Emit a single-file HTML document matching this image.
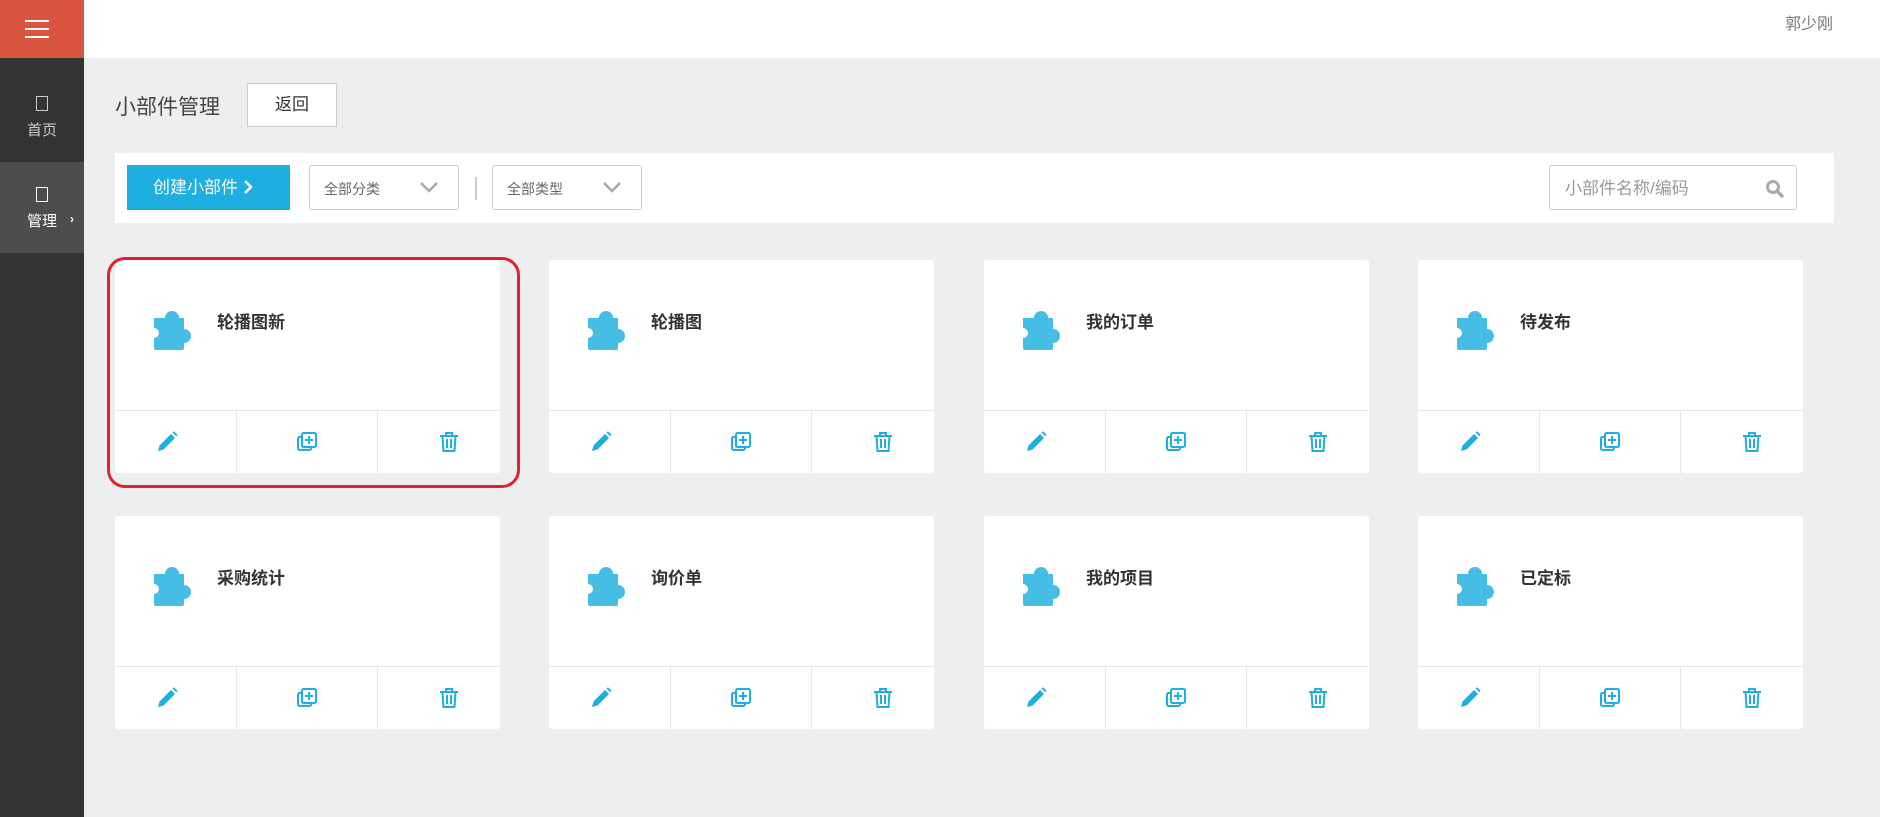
<!DOCTYPE html>
<html><head><meta charset="utf-8"><style>
*{margin:0;padding:0;box-sizing:border-box}
body{width:1880px;height:817px;background:#edeef0;font-family:"Liberation Sans","Noto Sans CJK SC",sans-serif;position:relative;overflow:hidden}
.abs{position:absolute}
.side{left:0;top:0;width:84px;height:817px;background:#333}
.burger{left:0;top:0;width:84px;height:58px;background:#d9553f}
.burger i{position:absolute;left:25px;width:24px;height:2px;background:#fff}
.item{left:0;width:84px;color:#ccc;font-size:15px;text-align:center}
.item .box{width:12px;height:15px;border:1px solid #ccc;margin:0 auto 8px}
.head{left:84px;top:0;width:1796px;height:58px;background:#fff}
.sel{background:#fff;border:1px solid #ccc;border-radius:3px;height:45px;top:165px;font-size:14px;color:#666;padding:13px 0 0 14px}
.card{width:385px;height:213px;background:#fff;border-radius:3px}
.card .t{position:absolute;left:102px;top:48px;font-size:17px;font-weight:bold;color:#333}
.card .pz{position:absolute;left:37px;top:48px}
.card .ft{position:absolute;left:0;top:150px;width:385px;height:63px;border-top:1px solid #e6e6e6}
.card .d{position:absolute;top:0;width:1px;height:63px;background:#e6e6e6}
.card .ic{position:absolute;top:20px}
</style></head><body>
<div class="abs side"></div>
<div class="abs burger"><i style="top:20px"></i><i style="top:28px"></i><i style="top:36px"></i></div>
<div class="abs item" style="top:96px"><div class="box"></div>首页</div>
<div class="abs item" style="top:162px;height:91px;background:#4d4d4d;color:#fff;padding-top:25px"><div class="box" style="border-color:#fff"></div>管理<span style="position:absolute;left:70px;top:50px;font-size:12px;font-weight:bold">›</span></div>
<div class="abs head"></div>
<div class="abs" style="left:1785px;top:10px;font-size:16px;color:#777">郭少刚</div>
<div class="abs" style="left:115px;top:91px;font-size:21px;color:#444">小部件管理</div>
<div class="abs" style="left:247px;top:83px;width:90px;height:44px;background:#fff;border:1px solid #ccc;font-size:17px;color:#333;text-align:center;line-height:42px">返回</div>
<div class="abs" style="left:115px;top:153px;width:1719px;height:70px;background:#fff"></div>
<div class="abs" style="left:127px;top:165px;width:163px;height:45px;background:#1eaee0;color:#fff;font-size:17px;line-height:45px;padding-left:26px">创建小部件 <svg width="10" height="16" viewBox="0 0 10 16" style="vertical-align:-2px"><path d="M2 2l6 6-6 6" stroke="#fff" stroke-width="2.5" fill="none"/></svg></div>
<div class="abs sel" style="left:309px;width:150px">全部分类<svg class="abs" style="left:109px;top:15px" width="20" height="12"><path d="M2 2l8 8 8-8" stroke="#aaa" stroke-width="2.5" fill="none"/></svg></div>
<div class="abs" style="left:475px;top:177px;width:2px;height:23px;background:#ccc"></div>
<div class="abs sel" style="left:492px;width:150px">全部类型<svg class="abs" style="left:109px;top:15px" width="20" height="12"><path d="M2 2l8 8 8-8" stroke="#aaa" stroke-width="2.5" fill="none"/></svg></div>
<div class="abs sel" style="left:1549px;width:248px;font-size:17px;color:#999;padding:8px 0 0 15px">小部件名称/编码<svg class="abs" style="left:215px;top:13px" width="20" height="20"><circle cx="8" cy="8" r="5.5" stroke="#aaa" stroke-width="3" fill="none"/><path d="M12 12l5 5" stroke="#aaa" stroke-width="3.5" stroke-linecap="round"/></svg></div>

<div id="cards"></div>
<div class="abs" style="left:107px;top:257px;width:413px;height:231px;border:3px solid #e4202a;border-radius:18px"></div>
<script>
var names=["轮播图新","轮播图","我的订单","待发布","采购统计","询价单","我的项目","已定标"];
var xs=[115,549,984,1418],ys=[260,516],h="";
var pz='<svg class="pz" width="42" height="42" viewBox="0 0 42 42"><path fill="#45bde5" d="M2 10h11a7 7 0 1 1 14 0h5v11a7 7 0 1 1 0 14v5a2 2 0 0 1-2 2H4a2 2 0 0 1-2-2V30a5 5 0 1 0 0-10z"/></svg>';
var pen='<svg class="ic" style="left:41px" width="22" height="22" viewBox="0 0 22 22"><path fill="#1eaee0" d="M2 20l1.5-5.5L15 3l4 4L7.5 18.5zM16.5 1.5l1.5-1.2 3.5 3.5-1.2 1.5z"/></svg>';
var cp='<svg class="ic" style="left:181px" width="22" height="22" viewBox="0 0 22 22"><rect x="2" y="6" width="13" height="13" rx="1.5" fill="none" stroke="#1eaee0" stroke-width="2"/><rect x="6" y="2" width="14" height="14" rx="1.5" fill="#fff" stroke="#1eaee0" stroke-width="2"/><path d="M13 5v8M9 9h8" stroke="#1eaee0" stroke-width="2"/></svg>';
var tr='<svg class="ic" style="left:323px" width="22" height="22" viewBox="0 0 22 22"><path d="M2 5h18M8 5V2h6v3M4.5 5l1 15h11l1-15M9 8v9M13 8v9" fill="none" stroke="#1eaee0" stroke-width="2"/></svg>';
for(var r=0;r<2;r++)for(var c=0;c<4;c++){h+='<div class="abs card" style="left:'+xs[c]+'px;top:'+ys[r]+'px">'+pz+'<div class="t">'+names[r*4+c]+'</div><div class="ft"><div class="d" style="left:121px"></div><div class="d" style="left:262px"></div>'+pen+cp+tr+'</div></div>';}
document.getElementById('cards').innerHTML=h;
</script>
</body></html>
